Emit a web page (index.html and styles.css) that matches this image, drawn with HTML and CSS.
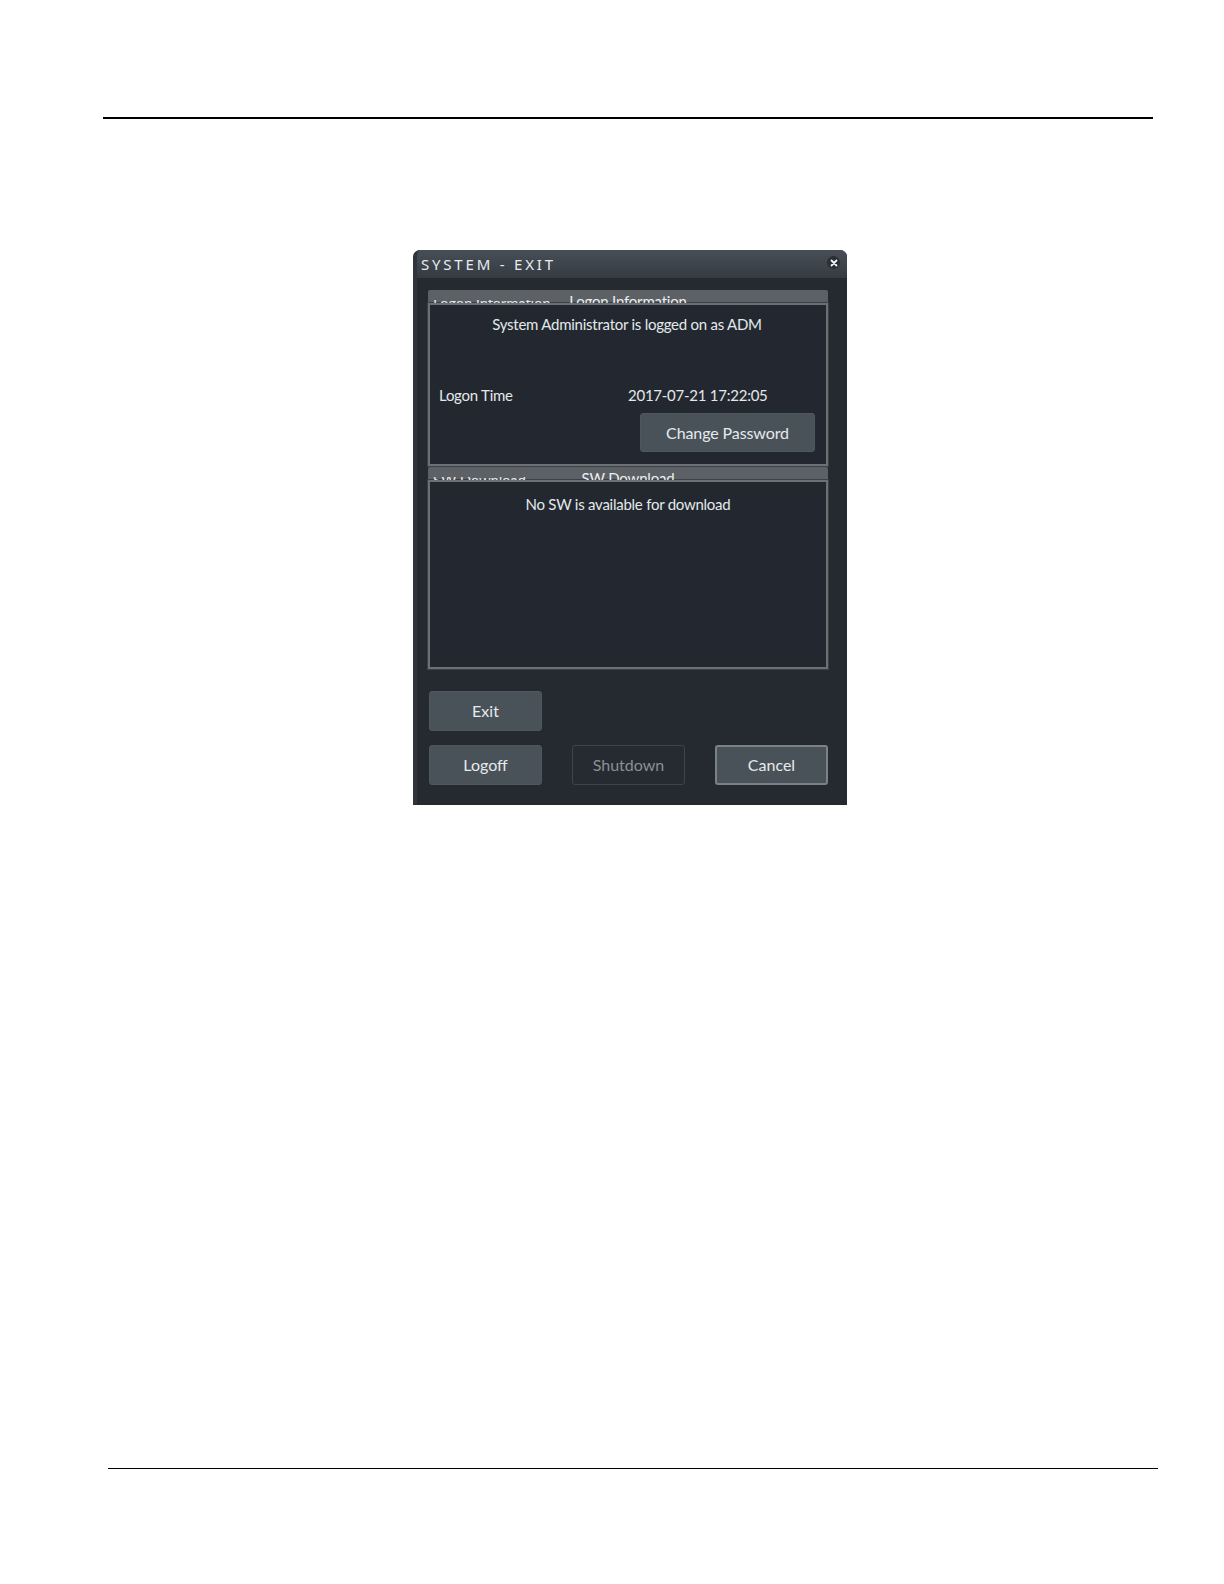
FILE: index.html
```html
<!DOCTYPE html>
<html>
<head>
<meta charset="utf-8">
<link rel="stylesheet" href="styles.css">
</head>
<body>
<div class="page">
  <div class="rule rule-top"></div>
  <div class="dialog">
    <div class="titlebar">
      <span class="title">SYSTEM - EXIT</span>
      <span class="close">
        <svg width="12" height="12" viewBox="0 0 12 12"><path d="M3.5 3.5 L8.5 8.5 M8.5 3.5 L3.5 8.5" stroke="#f2f4f5" stroke-width="1.8" stroke-linecap="round"/></svg>
      </span>
    </div>
    <div class="content">
      <div class="group">
        <div class="ghost"><span>Logon Information</span></div>
        <div class="strip"><span>Logon Information</span></div>
        <div class="box logon">
          <div class="centered">System Administrator is logged on as ADM</div>
          <div class="row">
            <span class="label">Logon Time</span>
            <span class="value">2017-07-21 17:22:05</span>
          </div>
          <div class="btnrow">
            <button class="btn btn-wide">Change Password</button>
          </div>
        </div>
      </div>
      <div class="group">
        <div class="ghost"><span>SW Download</span></div>
        <div class="strip"><span>SW Download</span></div>
        <div class="box download">
          <div class="centered">No SW is available for download</div>
        </div>
      </div>
      <div class="actions">
        <button class="btn">Exit</button>
        <span></span>
        <span></span>
        <button class="btn">Logoff</button>
        <button class="btn btn-disabled">Shutdown</button>
        <button class="btn btn-focus">Cancel</button>
      </div>
    </div>
  </div>
  <div class="rule rule-bottom"></div>
</div>
</body>
</html>
```
FILE: styles.css
```css
html, body {
  margin: 0;
  padding: 0;
  background: #ffffff;
}

.page {
  padding-top: 117px;
  font-family: Lato, "Noto Sans", sans-serif;
}

.rule {
  height: 1.5px;
  background: #000;
}

.rule-top {
  margin-left: 103px;
  width: 1050px;
}

.rule-bottom {
  margin-left: 108px;
  width: 1050px;
  margin-top: 663px;
}

.dialog {
  margin-left: 413px;
  margin-top: 131px;
  width: 434px;
  height: 555px;
  box-sizing: border-box;
  background: #252a31;
  border-left: 4px solid #30353b;
  border-radius: 7px 7px 0 0;
  overflow: hidden;
  color: #e4e8ea;
}

.titlebar {
  height: 28px;
  background: linear-gradient(#474e55, #353b42);
  display: flex;
  align-items: center;
  justify-content: space-between;
  padding: 0 7px 0 4px;
}

.title {
  font-family: "Noto Sans", sans-serif;
  font-size: 15px;
  letter-spacing: 2.8px;
  color: #e6ecef;
  padding-top: 1px;
}

.close {
  width: 13px;
  height: 13px;
  border-radius: 50%;
  background: #2a2f35;
  display: flex;
  align-items: center;
  justify-content: center;
  margin-bottom: 2px;
}

.close svg {
  display: block;
}

.content {
  padding: 12px 19px 0 11px;
}

.group {
  position: relative;
  margin-bottom: 1px;
}

.strip {
  height: 13px;
  background: #5d6166;
  border-radius: 2px 2px 0 0;
  overflow: hidden;
  text-align: center;
  font-size: 15px;
  line-height: 18px;
  letter-spacing: -0.2px;
  color: #eceef0;
}

.strip span {
  display: inline-block;
  margin-top: 2px;
}

.ghost {
  position: absolute;
  left: 5px;
  top: 10px;
  height: 3px;
  overflow: hidden;
  font-size: 15px;
  line-height: 18px;
  letter-spacing: -0.2px;
  color: #e2e5e7;
  z-index: 2;
}

.ghost span {
  display: block;
  margin-top: -6px;
}

.box {
  border: 2px solid #6b7075;
  box-shadow: 0 0 0 1px #3b4046;
  background: #232830;
  box-sizing: border-box;
}

.logon {
  height: 163px;
  padding: 10px 11px 0 9px;
}

.download {
  height: 189px;
  padding-top: 13px;
}

.centered {
  text-align: center;
  font-size: 15px;
  line-height: 18px;
  letter-spacing: -0.25px;
}

.row {
  display: grid;
  grid-template-columns: 189px 1fr;
  margin-top: 53px;
  font-size: 15px;
  line-height: 18px;
  letter-spacing: -0.25px;
}

.btnrow {
  display: flex;
  justify-content: flex-end;
  margin-top: 9px;
}

.btn {
  font-family: Lato, "Noto Sans", sans-serif;
  width: 113px;
  height: 40px;
  border: 1px solid #4f575e;
  border-radius: 3px;
  background: #4a5259;
  color: #e6eaec;
  font-size: 16px;
  padding: 0;
}

.btn-wide {
  width: 175px;
  height: 39px;
  font-size: 16px;
  letter-spacing: -0.1px;
}

.btn-disabled {
  background: #262b31;
  border-color: #3e444a;
  color: #8b9094;
}

.btn-focus {
  border: 2px solid #7b8186;
}

.actions {
  display: grid;
  grid-template-columns: 113px 113px 113px;
  justify-content: space-between;
  row-gap: 14px;
  padding: 21px 0 0 1px;
}
```
